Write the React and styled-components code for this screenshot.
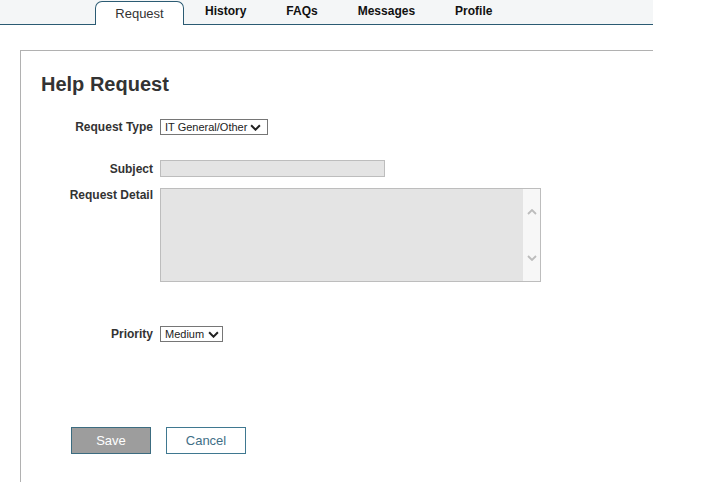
import React from 'react'
import styled, { createGlobalStyle } from 'styled-components'

const GlobalStyle = createGlobalStyle`
    body{
        margin: 0;
        background: white;
        font-family: "Liberation Sans", Arial, sans-serif;
        color: #333;
    }
`

const TabBar = styled.div`
    width: 653px;
    height: 25px;
    display: flex;
    align-items: flex-end;
    padding-left: 95px;
    box-sizing: border-box;
    background: #f4f6f7;
    border-bottom: 1px solid #2b5b73;
`

const Tab = styled.div`
    display: flex;
    align-items: center;
    justify-content: center;
    box-sizing: border-box;
    font-size: 12px;
    padding-bottom: 3px;
    height: 24px;
    &.active{
        width: 89px;
        height: 24px;
        margin-bottom: -1px;
        padding-bottom: 0;
        font-size: 13px;
        color: #333;
        background: white;
        border: 1px solid #2b5b73;
        border-bottom: none;
        border-radius: 7px 7px 0 0;
    }
    &:not(.active){
        padding-left: 20px;
        padding-right: 20px;
        font-weight: bold;
        color: #111;
    }
    &.first{
        padding-left: 21px;
    }
`

const Panel = styled.div`
    margin: 25px 0 0 20px;
    width: 633px;
    height: 432px;
    box-sizing: border-box;
    border-top: 1px solid #b1b1b1;
    border-left: 1px solid #b1b1b1;
    display: flex;
    flex-direction: column;
`

const Heading = styled.h1`
    margin: 22px 0 0 20px;
    font-size: 20px;
    line-height: 23px;
    font-weight: bold;
    color: #333;
`

const Row = styled.div`
    display: flex;
    align-items: ${props => props.top ? "flex-start" : "center"};
    gap: 7px;
    margin-top: ${props => props.gap}px;
`

const Label = styled.div`
    width: 132px;
    text-align: right;
    font-size: 12px;
    font-weight: bold;
    color: #333;
    line-height: 14px;
`

const SelectBox = styled.div`
    width: ${props => props.width}px;
    height: 16px;
    box-sizing: border-box;
    border: 1px solid #767676;
    background: white;
    display: flex;
    align-items: center;
    justify-content: space-between;
    padding: 0 ${props => props.pr}px 0 4px;
    font-size: 11px;
    color: #222;
`

const TextInput = styled.div`
    width: 225px;
    height: 17px;
    box-sizing: border-box;
    background: #e4e4e4;
    border: 1px solid #bdbdbd;
`

const TextArea = styled.div`
    width: 381px;
    height: 94px;
    box-sizing: border-box;
    background: #e4e4e4;
    border: 1px solid #bdbdbd;
    display: flex;
    justify-content: flex-end;
`

const ScrollColumn = styled.div`
    width: 17px;
    background: #f7f7f7;
    display: flex;
    flex-direction: column;
    align-items: center;
    justify-content: space-between;
    padding: 20px 0;
`

const ButtonRow = styled.div`
    display: flex;
    gap: 15px;
    margin: 85px 0 0 50px;
`

const Button = styled.div`
    width: 80px;
    height: 27px;
    box-sizing: border-box;
    display: flex;
    align-items: center;
    justify-content: center;
    font-size: 13px;
    border: 1px solid ${props => props.primary ? "#3c6c80" : "#3f7890"};
    background: ${props => props.primary ? "#9d9d9d" : "white"};
    color: ${props => props.primary ? "white" : "#3f6f87"};
`

const Chevron = ({ up, color = "#222", width = 11, height = 7, stroke = 1.8 }) => (
    <svg width={width} height={height} viewBox="0 0 10 6">
        <path
            d={up ? "M1 5 L5 1 L9 5" : "M1 1 L5 5 L9 1"}
            fill="none"
            stroke={color}
            strokeWidth={stroke}
        />
    </svg>
)

const tabs = ["History", "FAQs", "Messages", "Profile"]

const App = () => {
    return (
        <>
            <GlobalStyle />
            <TabBar>
                <Tab className="active">Request</Tab>
                {tabs.map((tab, i) => (
                    <Tab key={tab} className={i === 0 ? "first" : ""}>{tab}</Tab>
                ))}
            </TabBar>
            <Panel>
                <Heading>Help Request</Heading>
                <Row gap={23}>
                    <Label>Request Type</Label>
                    <SelectBox width={108} pr={6}>
                        <span>IT General/Other</span>
                        <Chevron />
                    </SelectBox>
                </Row>
                <Row gap={25}>
                    <Label>Subject</Label>
                    <TextInput />
                </Row>
                <Row gap={11} top>
                    <Label>Request Detail</Label>
                    <TextArea>
                        <ScrollColumn>
                            <Chevron up color="#bcbcbc" width={10} height={6} stroke={1.8} />
                            <Chevron color="#bcbcbc" width={10} height={6} stroke={1.8} />
                        </ScrollColumn>
                    </TextArea>
                </Row>
                <Row gap={44}>
                    <Label>Priority</Label>
                    <SelectBox width={63} pr={3}>
                        <span>Medium</span>
                        <Chevron />
                    </SelectBox>
                </Row>
                <ButtonRow>
                    <Button primary>Save</Button>
                    <Button>Cancel</Button>
                </ButtonRow>
            </Panel>
        </>
    )
}

export default App
